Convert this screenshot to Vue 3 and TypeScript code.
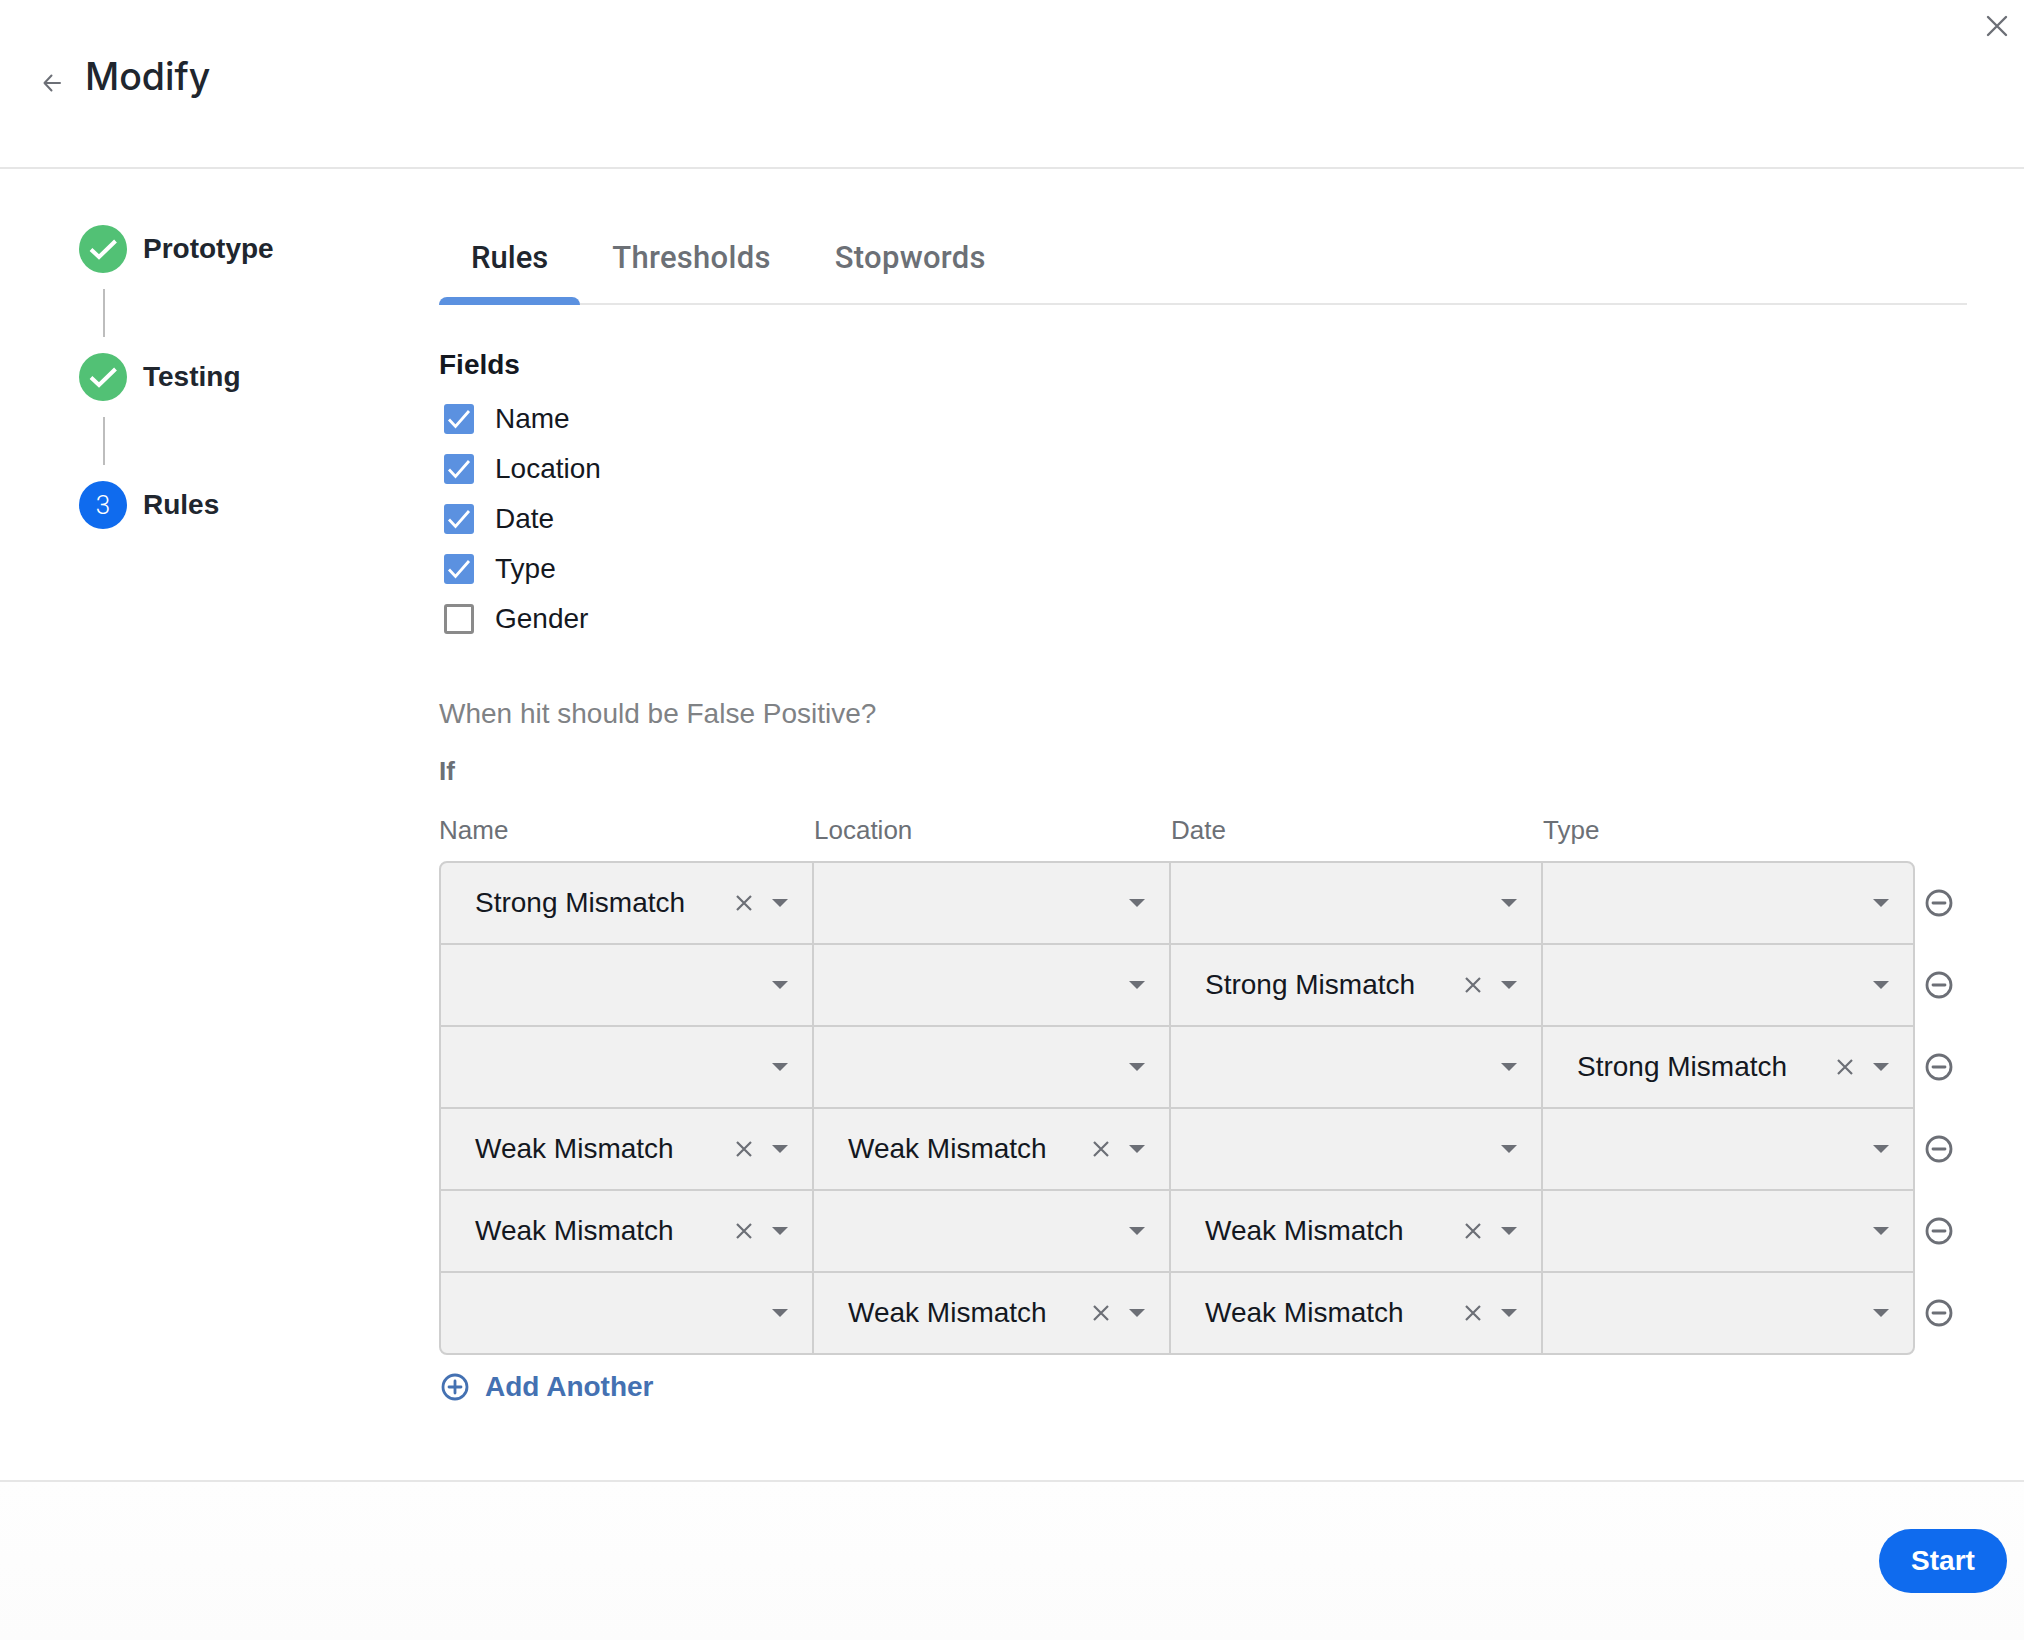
<script setup lang="ts">
const steps = [
  { label: 'Prototype', done: true },
  { label: 'Testing', done: true },
  { label: 'Rules', done: false },
]
const tabs = ['Rules', 'Thresholds', 'Stopwords']
const fields = [
  { label: 'Name', on: true },
  { label: 'Location', on: true },
  { label: 'Date', on: true },
  { label: 'Type', on: true },
  { label: 'Gender', on: false },
]
const columns = ['Name', 'Location', 'Date', 'Type']
const S = 'Strong Mismatch'
const W = 'Weak Mismatch'
const rows: string[][] = [
  [S, '', '', ''],
  ['', '', S, ''],
  ['', '', '', S],
  [W, W, '', ''],
  [W, '', W, ''],
  ['', W, W, ''],
]
</script>

<template>
  <div class="page">
    <header class="head">
      <svg class="back" width="18" height="18" viewBox="0 0 18 18" fill="none" stroke="#6c6f76" stroke-width="2" stroke-linecap="round" stroke-linejoin="round">
        <path d="M17 9H1.500M8.500 1.500 1.500 9l7 7.500" />
      </svg>
      <h1 class="title">Modify</h1>
      <svg class="close" width="22" height="22" viewBox="0 0 22 22" fill="none" stroke="#6c6f76" stroke-width="2.400" stroke-linecap="round">
        <path d="M2 2l18 18M20 2 2 20" />
      </svg>
    </header>

    <div class="body">
      <nav class="steps">
        <template v-for="(s, i) in steps" :key="s.label">
          <div class="step">
            <span class="dot" :class="s.done ? 'dot-done' : 'dot-now'">
              <svg v-if="s.done" width="28" height="22" viewBox="0 0 28 22" fill="none" stroke="#fff" stroke-width="4">
                <path d="M2 11.500l8 7.500L26.500 3" />
              </svg>
              <template v-else>{{ i + 1 }}</template>
            </span>
            <span class="step-label">{{ s.label }}</span>
          </div>
          <div v-if="i < steps.length - 1" class="step-line"></div>
        </template>
      </nav>

      <main class="main">
        <div class="tabs">
          <div v-for="(t, i) in tabs" :key="t" class="tab" :class="{ active: i === 0 }">{{ t }}</div>
        </div>

        <div class="fields-title">Fields</div>
        <ul class="fields">
          <li v-for="f in fields" :key="f.label" class="field">
            <span class="box" :class="{ on: f.on }">
              <svg v-if="f.on" width="24" height="20" viewBox="0 0 24 20" fill="none" stroke="#fff" stroke-width="2.800">
                <path d="M2 10.500l6.500 7L22 2" />
              </svg>
            </span>
            <span class="field-label">{{ f.label }}</span>
          </li>
        </ul>

        <p class="question">When hit should be False Positive?</p>
        <p class="if">If</p>

        <div class="col-heads">
          <span v-for="c in columns" :key="c">{{ c }}</span>
        </div>

        <div class="rule-wrap">
          <div class="table">
            <div v-for="(r, ri) in rows" :key="ri" class="row">
              <div v-for="(v, ci) in r" :key="ci" class="cell">
                <span class="value">{{ v }}</span>
                <svg v-if="v" class="clear" width="18" height="18" viewBox="0 0 18 18" fill="none" stroke="#6c6f76" stroke-width="2.200">
                  <path d="M2 2l14 14M16 2 2 16" />
                </svg>
                <span class="caret"></span>
              </div>
            </div>
          </div>
          <div class="minus-col">
            <div v-for="(r, ri) in rows" :key="ri" class="minus-slot">
              <svg width="28" height="28" viewBox="0 0 28 28" fill="none" stroke="#6c6f76" stroke-width="2.800">
                <circle cx="14" cy="14" r="12" />
                <path d="M8 14h12" stroke-linecap="round" />
              </svg>
            </div>
          </div>
        </div>

        <div class="add">
          <svg width="28" height="28" viewBox="0 0 28 28" fill="none" stroke="#4471b2" stroke-width="2.800">
            <circle cx="14" cy="14" r="12" />
            <path d="M8 14h12M14 8v12" stroke-linecap="round" />
          </svg>
          <span>Add Another</span>
        </div>
      </main>
    </div>

    <footer class="foot">
      <button class="start" type="button">Start</button>
    </footer>
  </div>
</template>

<style>
html,
body {
  margin: 0;
  background: #fff;
}
</style>

<style scoped>
.page {
  width: 2024px;
  height: 1640px;
  display: flex;
  flex-direction: column;
  font-family: 'Liberation Sans', Arial, sans-serif;
  color: #14181f;
  overflow: hidden;
  background: #fff;
}
.head {
  position: relative;
  flex: none;
  height: 167px;
  border-bottom: 2px solid #e6e6e6;
  display: flex;
  align-items: flex-start;
}
.back {
  margin: 74px 0 0 43px;
}
.title {
  margin: 54px 0 0 24px;
  font-family: Inter, 'Liberation Sans', sans-serif;
  font-weight: 500;
  font-size: 37.5px;
  line-height: 46px;
  color: #20262e;
}
.close {
  position: absolute;
  top: 15px;
  right: 16px;
}
.body {
  flex: 1;
  display: flex;
  min-height: 0;
}
.steps {
  flex: none;
  width: 439px;
  box-sizing: border-box;
  padding: 56px 0 0 79px;
}
.step {
  display: flex;
  align-items: center;
  gap: 16px;
  height: 48px;
}
.dot {
  width: 48px;
  height: 48px;
  border-radius: 50%;
  display: flex;
  align-items: center;
  justify-content: center;
  color: #fff;
  font-family: Roboto, sans-serif;
  font-weight: 300;
  font-size: 26px;
}
.dot-done {
  background: #52c175;
}
.dot-now {
  background: #0f6bee;
}
.step-label {
  font-weight: 700;
  font-size: 28px;
  color: #20262e;
}
.step-line {
  width: 2px;
  height: 48px;
  margin: 16px 0 16px 24px;
  background: #bdbdbd;
}
.main {
  flex: none;
  width: 1528px;
}
.tabs {
  display: flex;
  align-items: flex-end;
  height: 136px;
  box-sizing: border-box;
  border-bottom: 2px solid #e6e6e6;
}
.tab {
  position: relative;
  padding: 0 32px;
  height: 76px;
  box-sizing: border-box;
  margin-bottom: -2px;
  color: #6c7076;
  font-family: Roboto, sans-serif;
  font-weight: 500;
  font-size: 31px;
  line-height: 58px;
  letter-spacing: 0.3px;
  white-space: nowrap;
}
.tab.active {
  color: #20262e;
  letter-spacing: 0;
}
.tab.active::after {
  content: '';
  position: absolute;
  left: 0;
  right: 0;
  bottom: 0;
  height: 8px;
  background: #5b91e0;
  border-radius: 8px 8px 0 0;
}
.fields-title {
  margin-top: 44px;
  font-weight: 700;
  font-size: 28px;
  line-height: 32px;
}
.fields {
  list-style: none;
  margin: 13px 0 0;
  padding: 0;
}
.field {
  display: flex;
  align-items: center;
  height: 50px;
  padding-left: 5px;
}
.box {
  flex: none;
  width: 30px;
  height: 30px;
  box-sizing: border-box;
  border: 3px solid #8a8a8a;
  border-radius: 3px;
  display: flex;
  align-items: center;
  justify-content: center;
  margin-right: 21px;
}
.box.on {
  background: #5b91e0;
  border: none;
}
.field-label {
  font-size: 28px;
}
.question {
  margin: 52px 0 0;
  font-size: 28px;
  line-height: 36px;
  color: #7f8285;
}
.if {
  margin: 24px 0 0;
  font-weight: 700;
  font-size: 26px;
  line-height: 30px;
  color: #6c7076;
}
.col-heads {
  display: grid;
  grid-template-columns: 375px 357px 372px 1fr;
  width: 1476px;
  margin-top: 29px;
  font-size: 26px;
  line-height: 30px;
  color: #6c7076;
}
.col-heads span {
  display: block;
}
.rule-wrap {
  display: flex;
  margin-top: 16px;
}
.table {
  width: 1476px;
  box-sizing: border-box;
  border: 2px solid #cfcfcf;
  border-radius: 8px;
  overflow: hidden;
  background: #f1f1f1;
}
.row {
  display: grid;
  grid-template-columns: 373px 357px 372px 370px;
  height: 82px;
  box-sizing: border-box;
  border-bottom: 2px solid #cfcfcf;
}
.row:last-child {
  border-bottom: none;
  height: 80px;
}
.cell {
  display: flex;
  align-items: center;
  box-sizing: border-box;
  border-right: 2px solid #cfcfcf;
  padding: 0 24px 0 34px;
}
.cell:last-child {
  border-right: none;
}
.value {
  flex: 1;
  font-size: 28px;
  white-space: nowrap;
  color: #14181f;
}
.clear {
  flex: none;
  margin-right: 19px;
}
.caret {
  flex: none;
  width: 0;
  height: 0;
  border-left: 8px solid transparent;
  border-right: 8px solid transparent;
  border-top: 8px solid #6c6f76;
}
.minus-col {
  margin-left: 10px;
  padding-top: 1px;
}
.minus-slot {
  height: 82px;
  display: flex;
  align-items: center;
}
.add {
  display: flex;
  align-items: center;
  gap: 16px;
  margin-top: 16px;
  padding-left: 2px;
  font-weight: 700;
  font-size: 28px;
  line-height: 32px;
  color: #4471b2;
}
.foot {
  flex: none;
  height: 160px;
  box-sizing: border-box;
  border-top: 2px solid #e6e6e6;
  background: linear-gradient(#fefefe, #fcfcfc);
  display: flex;
  justify-content: flex-end;
  align-items: flex-start;
  padding: 47px 17px 0 0;
}
.start {
  width: 128px;
  height: 64px;
  border: none;
  border-radius: 32px;
  background: #0f6bee;
  color: #fff;
  font-family: 'Liberation Sans', Arial, sans-serif;
  font-weight: 700;
  font-size: 28px;
}
</style>
